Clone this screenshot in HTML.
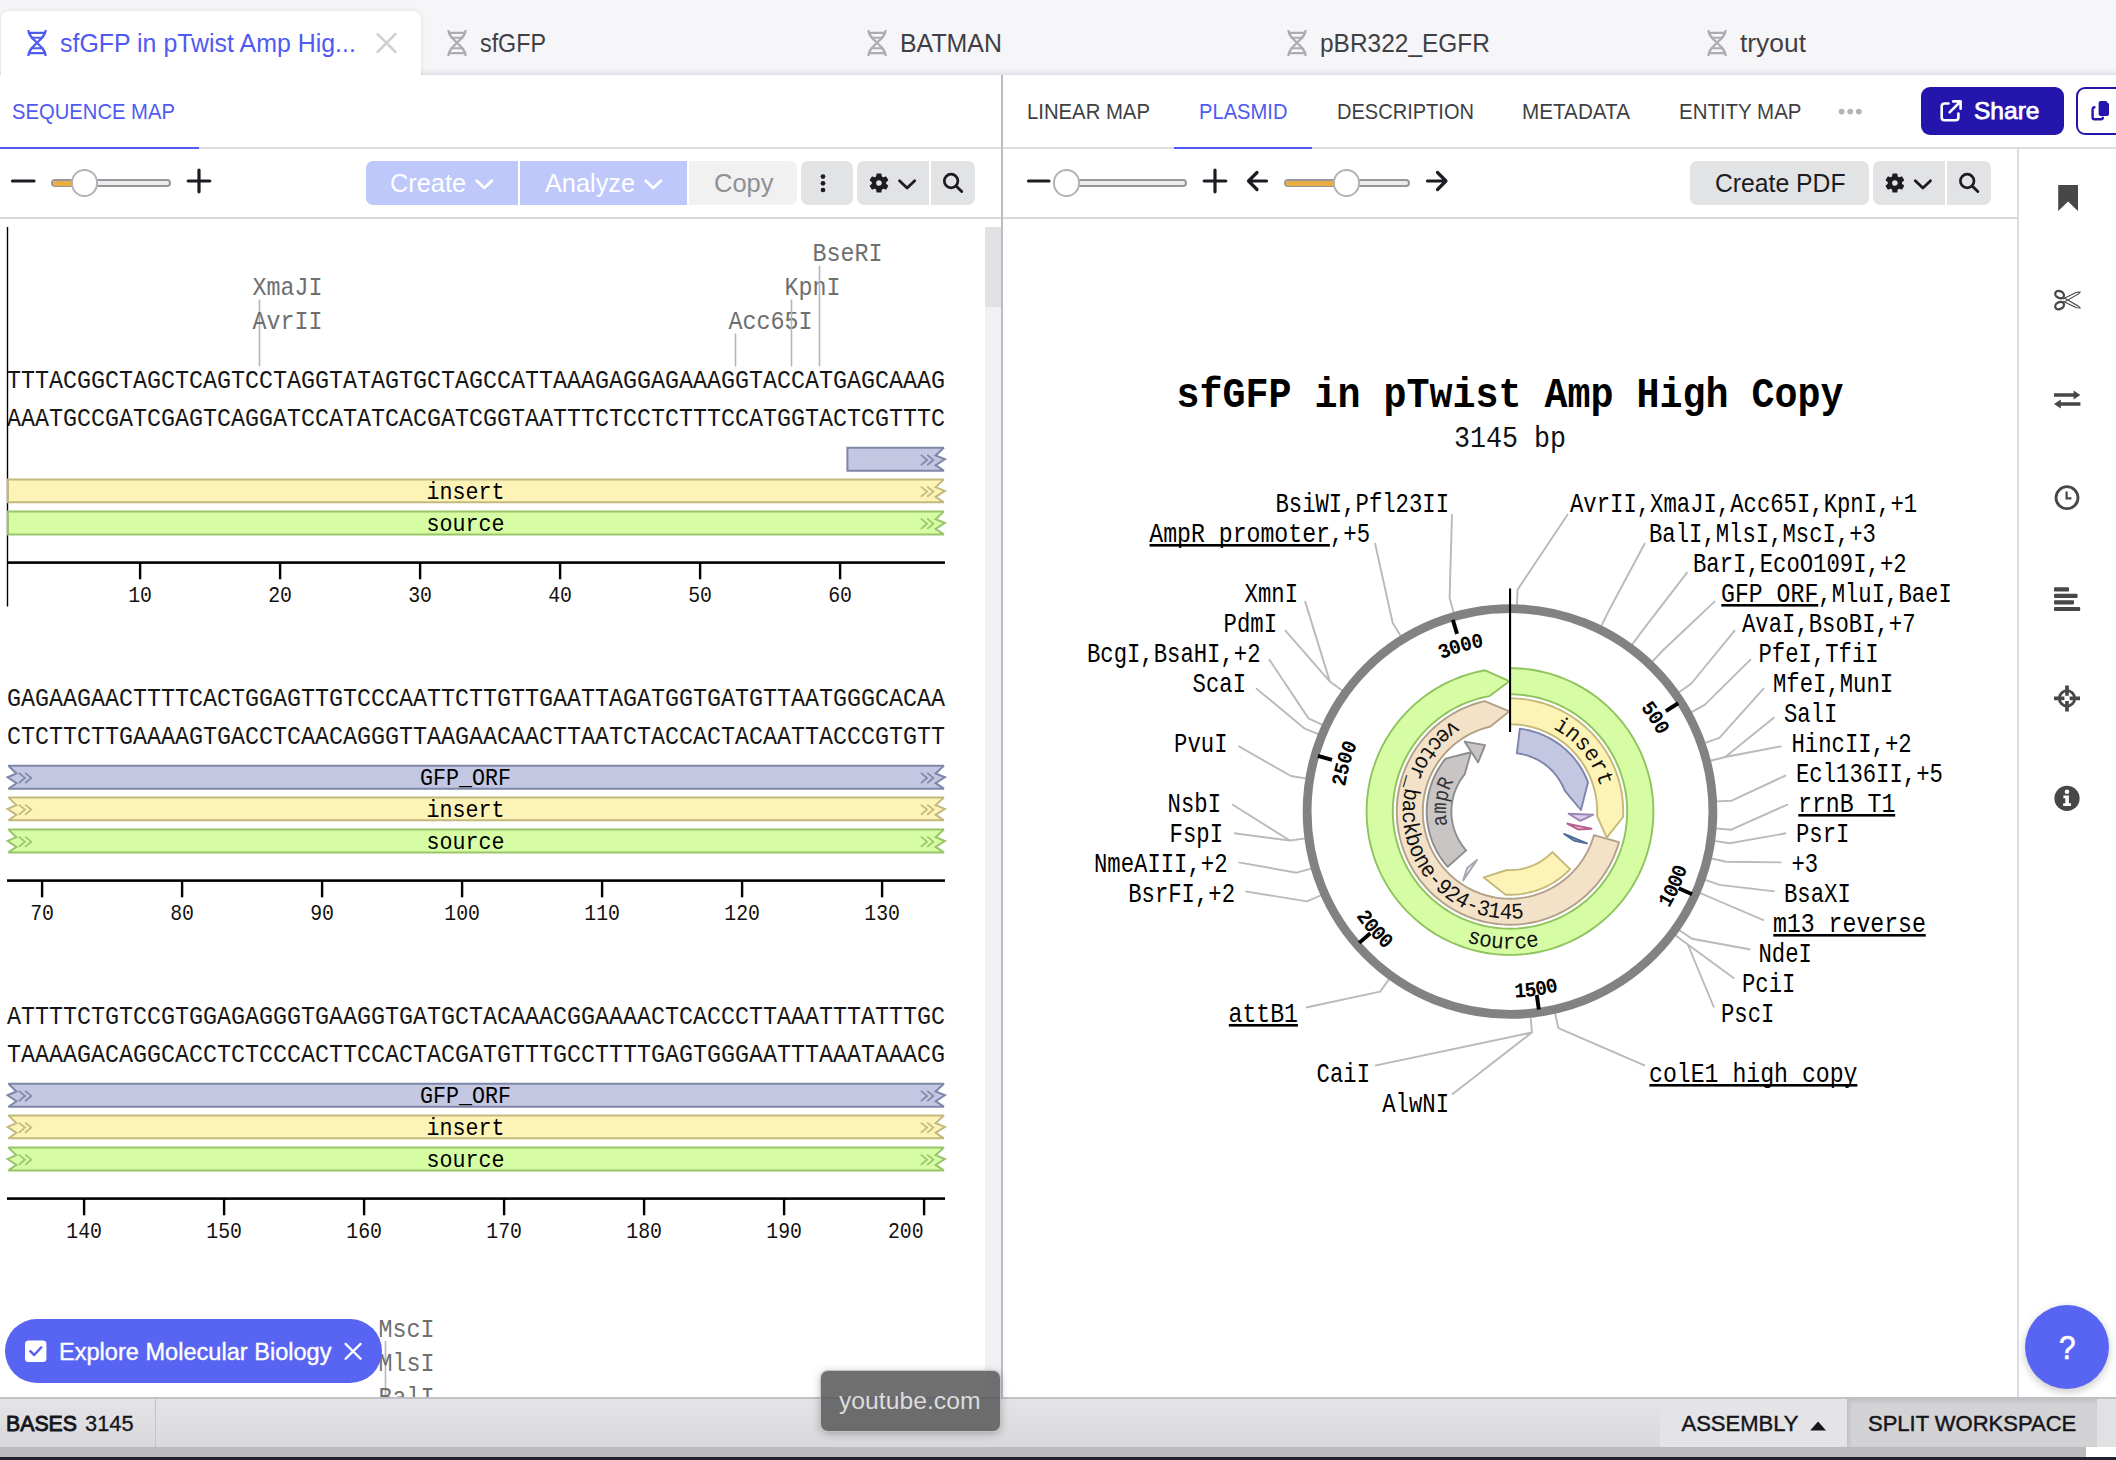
<!DOCTYPE html>
<html><head><meta charset="utf-8"><title>sfGFP in pTwist Amp High Copy</title>
<style>
*{box-sizing:border-box;margin:0;padding:0}
html,body{width:2116px;height:1460px;overflow:hidden;background:#fff;font-family:"Liberation Sans",sans-serif;color:#1c1c22}
.abs{position:absolute}
#topbar{position:absolute;left:0;top:0;width:2116px;height:75px;background:#f6f6f8;box-shadow:inset 0 -6px 5px -4px rgba(70,90,120,.17)}
.tab{position:absolute;top:11px;height:64px;width:420px;font-size:25px;line-height:64px;color:#46464b;white-space:nowrap}
.tab.act{background:#fff;border-radius:8px 8px 0 0;color:#4f5af0;box-shadow:0 0 5px rgba(0,0,0,.10)}
.tab svg{position:absolute;left:26px;top:19px}
.tab span{position:absolute;left:59px;top:0;letter-spacing:-.35px}
.sub{position:absolute;top:75px;height:72px;line-height:73px;font-size:21px;color:#3f3f44;white-space:nowrap;letter-spacing:-.2px}
.hl{position:absolute;height:2px;background:#dcdde0}
.btn{position:absolute;top:161px;height:44px;background:#e2e3e5;line-height:44px;text-align:center;font-size:26px;white-space:nowrap;letter-spacing:-.4px}
.trk{position:absolute;height:8.5px;border-radius:4.5px;background:#ececee;border:2px solid #97979b}
.org{position:absolute;height:5px;background:#e9ae43;border-radius:3px 0 0 3px}
.thumb{position:absolute;width:27.6px;height:27.6px;border-radius:50%;background:#fff;border:2px solid #b3b3b7}
.ic{position:absolute}
.t{position:absolute;white-space:nowrap;transform-origin:0 0;display:block}
</style></head><body>

<div id="topbar"></div>
<div class="tab act" style="left:1px"><svg width="20" height="26" viewBox="0 0 19.4 25.8" fill="none" stroke="#4f5af0" stroke-width="2.2"><path d="M1.1,0 C1.1,9.5 18.3,15.5 18.3,25.8 M18.3,0 C18.3,9.5 1.1,15.5 1.1,25.8" /><path d="M1.6,2.9 H17.8 M3.6,7.7 H15.8 M3.6,18.1 H15.8 M1.6,22.9 H17.8" stroke-width="2.1"/></svg></div>
<span class="t" style="left:60.00px;top:30.76px;font-size:25.2px;line-height:25.2px;color:#4f5af0;transform:scaleX(0.9892);">sfGFP in pTwist Amp Hig...</span>
<div class="tab" style="left:421px"><svg width="20" height="26" viewBox="0 0 19.4 25.8" fill="none" stroke="#adadb1" stroke-width="2.2"><path d="M1.1,0 C1.1,9.5 18.3,15.5 18.3,25.8 M18.3,0 C18.3,9.5 1.1,15.5 1.1,25.8" /><path d="M1.6,2.9 H17.8 M3.6,7.7 H15.8 M3.6,18.1 H15.8 M1.6,22.9 H17.8" stroke-width="2.1"/></svg></div>
<span class="t" style="left:480.00px;top:30.76px;font-size:25.2px;line-height:25.2px;color:#3f3f45;transform:scaleX(0.9243);">sfGFP</span>
<div class="tab" style="left:841px"><svg width="20" height="26" viewBox="0 0 19.4 25.8" fill="none" stroke="#adadb1" stroke-width="2.2"><path d="M1.1,0 C1.1,9.5 18.3,15.5 18.3,25.8 M18.3,0 C18.3,9.5 1.1,15.5 1.1,25.8" /><path d="M1.6,2.9 H17.8 M3.6,7.7 H15.8 M3.6,18.1 H15.8 M1.6,22.9 H17.8" stroke-width="2.1"/></svg></div>
<span class="t" style="left:900.00px;top:30.76px;font-size:25.2px;line-height:25.2px;color:#3f3f45;transform:scaleX(0.9890);">BATMAN</span>
<div class="tab" style="left:1261px"><svg width="20" height="26" viewBox="0 0 19.4 25.8" fill="none" stroke="#adadb1" stroke-width="2.2"><path d="M1.1,0 C1.1,9.5 18.3,15.5 18.3,25.8 M18.3,0 C18.3,9.5 1.1,15.5 1.1,25.8" /><path d="M1.6,2.9 H17.8 M3.6,7.7 H15.8 M3.6,18.1 H15.8 M1.6,22.9 H17.8" stroke-width="2.1"/></svg></div>
<span class="t" style="left:1320.00px;top:30.76px;font-size:25.2px;line-height:25.2px;color:#3f3f45;transform:scaleX(0.9710);">pBR322_EGFR</span>
<div class="tab" style="left:1681px"><svg width="20" height="26" viewBox="0 0 19.4 25.8" fill="none" stroke="#adadb1" stroke-width="2.2"><path d="M1.1,0 C1.1,9.5 18.3,15.5 18.3,25.8 M18.3,0 C18.3,9.5 1.1,15.5 1.1,25.8" /><path d="M1.6,2.9 H17.8 M3.6,7.7 H15.8 M3.6,18.1 H15.8 M1.6,22.9 H17.8" stroke-width="2.1"/></svg></div>
<span class="t" style="left:1740.00px;top:30.76px;font-size:25.2px;line-height:25.2px;color:#3f3f45;transform:scaleX(1.0472);">tryout</span>
<div class="abs " style="left:0px;top:75px;width:2116px;height:72px;background:#fff;"></div>
<svg class="ic" style="left:372px;top:30px" width="30" height="28"><path d="M4.9,3.3 L24.1,22.7 M24.1,3.3 L4.9,22.7" stroke="#cfcfd3" stroke-width="2.6" stroke-linecap="butt"/></svg>
<div class="abs " style="left:0px;top:147px;width:2116px;height:2px;background:#dcdde0;"></div>
<div class="abs " style="left:0px;top:147px;width:199px;height:2px;background:#4f5af0;"></div>
<div class="abs " style="left:1174px;top:147px;width:138px;height:2px;background:#4f5af0;"></div>
<span class="t" style="left:12.00px;top:102.08px;font-size:21.4px;line-height:21.4px;color:#4f5af0;transform:scaleX(0.9453);">SEQUENCE MAP</span>
<span class="t" style="left:1027.00px;top:102.08px;font-size:21.4px;line-height:21.4px;color:#3f3f44;transform:scaleX(0.9489);">LINEAR MAP</span>
<span class="t" style="left:1199.00px;top:102.08px;font-size:21.4px;line-height:21.4px;color:#4f5af0;transform:scaleX(0.9420);">PLASMID</span>
<span class="t" style="left:1336.50px;top:102.08px;font-size:21.4px;line-height:21.4px;color:#3f3f44;transform:scaleX(0.9368);">DESCRIPTION</span>
<span class="t" style="left:1522.00px;top:102.08px;font-size:21.4px;line-height:21.4px;color:#3f3f44;transform:scaleX(0.9664);">METADATA</span>
<span class="t" style="left:1679.00px;top:102.08px;font-size:21.4px;line-height:21.4px;color:#3f3f44;transform:scaleX(0.9568);">ENTITY MAP</span>
<svg class="ic" style="left:1836px;top:106px" width="30" height="12"><circle cx="5.6" cy="5.6" r="2.9" fill="#b4b4b8"/><circle cx="14.2" cy="5.6" r="2.9" fill="#b4b4b8"/><circle cx="22.8" cy="5.6" r="2.9" fill="#b4b4b8"/></svg>
<div class="abs " style="left:1921px;top:87px;width:143px;height:48px;background:#2416ac;border-radius:9px"></div>
<svg class="ic" style="left:1938px;top:98px" width="26" height="26" fill="none" stroke="#fff" stroke-width="2.6" stroke-linecap="round" stroke-linejoin="round"><path d="M10.5,5.5 H6.3 a2.6,2.6 0 0 0 -2.6,2.6 V19.6 a2.6,2.6 0 0 0 2.6,2.6 H17.8 a2.6,2.6 0 0 0 2.6,-2.6 V15.6"/><path d="M15.2,3.4 H22.6 V10.8 M22,4 L11.6,14.4"/></svg>
<span class="t" style="left:1973.80px;top:100.02px;font-size:23.6px;line-height:23.6px;color:#fff;-webkit-text-stroke:0.75px #fff;transform:scaleX(1.0401);">Share</span>
<div class="abs" style="left:2076px;top:87px;width:60px;height:48px;border:2.5px solid #2416ac;border-radius:9px;background:#fff"></div>
<svg class="ic" style="left:2086px;top:96px" width="30" height="30" viewBox="2086 96 30 30"><path d="M2100.6,101 h5.4 l3,3 v9.9 a2,2 0 0 1 -2,2 h-6.4 a2,2 0 0 1 -2,-2 v-10.9 a2,2 0 0 1 2,-2z" fill="#2416ac"/><path d="M2095.4,107.3 h-1 a1.8,1.8 0 0 0 -1.8,1.8 v8.4 a1.8,1.8 0 0 0 1.8,1.8 h6.6 a1.8,1.8 0 0 0 1.8,-1.8 v-0.8" fill="none" stroke="#2416ac" stroke-width="2.4"/></svg>
<div class="abs " style="left:0px;top:217px;width:2019px;height:2px;background:#d9dadd;"></div>
<svg class="ic" style="left:0;top:150px" width="2020" height="66" stroke="#1c1c22" stroke-width="3.2" stroke-linecap="round" stroke-linejoin="round" fill="none"><path d="M12.5,31 H34"/><path d="M188.2,31 H209.8 M199,20.2 V41.8"/><path d="M1028.5,31 H1049"/><path d="M1204.2,31 H1225.8 M1215,20.2 V41.8"/><path d="M1266.5,31 H1249 M1257,22.5 L1248.5,31 L1257,39.5"/><path d="M1427.5,31 H1445.5 M1437.5,22.5 L1446,31 L1437.5,39.5"/></svg>
<div class="trk" style="left:51px;top:178.7px;width:120px"></div><div class="org" style="left:53px;top:180.7px;width:24px"></div><div class="thumb" style="left:70.9px;top:169.1px"></div>
<div class="trk" style="left:1066px;top:178.7px;width:121px"></div><div class="thumb" style="left:1052.7px;top:169.1px"></div>
<div class="trk" style="left:1284px;top:178.7px;width:126px"></div><div class="org" style="left:1286px;top:180.7px;width:55px"></div><div class="thumb" style="left:1332.8px;top:169.1px"></div>
<div class="abs " style="left:366px;top:161px;width:152px;height:44px;background:#bec8fa;border-radius:7px 0 0 7px"></div>
<div class="abs " style="left:520px;top:161px;width:167px;height:44px;background:#bec8fa;"></div>
<div class="abs " style="left:689px;top:161px;width:108px;height:44px;background:#f1f1f2;border-radius:0 7px 7px 0"></div>
<div class="abs " style="left:801px;top:161px;width:52px;height:44px;background:#e2e3e5;border-radius:7px"></div>
<div class="abs " style="left:857px;top:161px;width:72px;height:44px;background:#e2e3e5;border-radius:7px 0 0 7px"></div>
<div class="abs " style="left:931px;top:161px;width:44px;height:44px;background:#e2e3e5;border-radius:0 7px 7px 0"></div>
<span class="t" style="left:390.00px;top:169.99px;font-size:26px;line-height:26px;color:#fff;transform:scaleX(0.9739);">Create</span>
<span class="t" style="left:545.00px;top:169.99px;font-size:26px;line-height:26px;color:#fff;transform:scaleX(0.9730);">Analyze</span>
<span class="t" style="left:713.50px;top:169.99px;font-size:26px;line-height:26px;color:#8e9096;transform:scaleX(0.9803);">Copy</span>
<div class="abs " style="left:1690px;top:161px;width:179px;height:44px;background:#e2e3e5;border-radius:7px"></div>
<div class="abs " style="left:1873px;top:161px;width:72px;height:44px;background:#e2e3e5;border-radius:7px 0 0 7px"></div>
<div class="abs " style="left:1947px;top:161px;width:44px;height:44px;background:#e2e3e5;border-radius:0 7px 7px 0"></div>
<span class="t" style="left:1714.50px;top:169.99px;font-size:26px;line-height:26px;color:#1c1c22;transform:scaleX(0.9507);">Create PDF</span>
<svg class="ic" style="left:0;top:150px" width="2020" height="66"><g transform="translate(0,-150)"><path d="M476.70,180.65 l7.60,7.30 l7.60,-7.30" fill="none" stroke="#fff" stroke-width="2.8" stroke-linecap="round" stroke-linejoin="round"/><path d="M645.70,180.65 l7.60,7.30 l7.60,-7.30" fill="none" stroke="#fff" stroke-width="2.8" stroke-linecap="round" stroke-linejoin="round"/><circle cx="823" cy="176.6" r="2.35" fill="#1c1c22"/><circle cx="823" cy="183.3" r="2.35" fill="#1c1c22"/><circle cx="823" cy="190" r="2.35" fill="#1c1c22"/><path d="M876.86,176.76 L877.21,174.18 L880.79,174.18 L881.14,176.76 L883.34,178.03 L885.74,177.04 L887.53,180.14 L885.48,181.73 L885.48,184.27 L887.53,185.86 L885.74,188.96 L883.34,187.97 L881.14,189.24 L880.79,191.82 L877.21,191.82 L876.86,189.24 L874.66,187.97 L872.26,188.96 L870.47,185.86 L872.52,184.27 L872.52,181.73 L870.47,180.14 L872.26,177.04 L874.66,178.03Z M875.50,183.00 a3.50,3.50 0 1,0 7.00,0 a3.50,3.50 0 1,0 -7.00,0Z" fill="#1c1c22" fill-rule="evenodd" stroke="#1c1c22" stroke-width="1.4" stroke-linejoin="round"/><path d="M899.50,180.75 l7.60,7.30 l7.60,-7.30" fill="none" stroke="#1c1c22" stroke-width="2.8" stroke-linecap="round" stroke-linejoin="round"/><circle cx="951.10" cy="181.00" r="6.8" fill="none" stroke="#1c1c22" stroke-width="2.7"/><path d="M956.30,186.20 L961.70,191.50" stroke="#1c1c22" stroke-width="2.9" stroke-linecap="round"/><path d="M1892.76,176.76 L1893.11,174.18 L1896.69,174.18 L1897.04,176.76 L1899.24,178.03 L1901.64,177.04 L1903.43,180.14 L1901.38,181.73 L1901.38,184.27 L1903.43,185.86 L1901.64,188.96 L1899.24,187.97 L1897.04,189.24 L1896.69,191.82 L1893.11,191.82 L1892.76,189.24 L1890.56,187.97 L1888.16,188.96 L1886.37,185.86 L1888.42,184.27 L1888.42,181.73 L1886.37,180.14 L1888.16,177.04 L1890.56,178.03Z M1891.40,183.00 a3.50,3.50 0 1,0 7.00,0 a3.50,3.50 0 1,0 -7.00,0Z" fill="#1c1c22" fill-rule="evenodd" stroke="#1c1c22" stroke-width="1.4" stroke-linejoin="round"/><path d="M1915.30,180.75 l7.60,7.30 l7.60,-7.30" fill="none" stroke="#1c1c22" stroke-width="2.8" stroke-linecap="round" stroke-linejoin="round"/><circle cx="1967.20" cy="181.00" r="6.8" fill="none" stroke="#1c1c22" stroke-width="2.7"/><path d="M1972.40,186.20 L1977.80,191.50" stroke="#1c1c22" stroke-width="2.9" stroke-linecap="round"/></g></svg>
<svg class="ic" style="left:0;top:219px" width="1001" height="1179" viewBox="0 219 1001 1179" font-family='"Liberation Mono",monospace'><rect x="985" y="227" width="16" height="1171" fill="#f0f1f3"/><rect x="985" y="227" width="16" height="80" fill="#e1e2e4"/><rect x="6.8" y="227" width="1.4" height="379.5" fill="#000"/><rect x="258.70" y="299.50" width="1.6" height="67.00" fill="#b6b6be"/><text x="252.50" y="295.00" font-size="26" fill="#6f6f6f" textLength="70.00" lengthAdjust="spacingAndGlyphs">XmaJI</text><text x="252.50" y="329.00" font-size="26" fill="#6f6f6f" textLength="70.00" lengthAdjust="spacingAndGlyphs">AvrII</text><rect x="734.70" y="333.50" width="1.6" height="33.00" fill="#b6b6be"/><text x="728.50" y="329.00" font-size="26" fill="#6f6f6f" textLength="84.00" lengthAdjust="spacingAndGlyphs">Acc65I</text><rect x="790.70" y="299.50" width="1.6" height="67.00" fill="#b6b6be"/><text x="784.50" y="295.00" font-size="26" fill="#6f6f6f" textLength="56.00" lengthAdjust="spacingAndGlyphs">KpnI</text><rect x="818.70" y="265.50" width="1.6" height="101.00" fill="#b6b6be"/><text x="812.50" y="261.00" font-size="26" fill="#6f6f6f" textLength="70.00" lengthAdjust="spacingAndGlyphs">BseRI</text><text x="7.10" y="388.30" font-size="26" fill="#161616" textLength="938.00" lengthAdjust="spacingAndGlyphs">TTTACGGCTAGCTCAGTCCTAGGTATAGTGCTAGCCATTAAAGAGGAGAAAGGTACCATGAGCAAAG</text><text x="7.10" y="426.30" font-size="26" fill="#161616" textLength="938.00" lengthAdjust="spacingAndGlyphs">AAATGCCGATCGAGTCAGGATCCATATCACGATCGGTAATTTCTCCTCTTTCCATGGTACTCGTTTC</text><path d="M847.40,447.80 L943.90,447.80 L935.60,455.47 L944.90,459.25 L935.60,465.20 L943.90,470.70 L847.40,470.70Z" fill="#c3c7e2" stroke="#7f86a8" stroke-width="2" stroke-linejoin="miter" stroke-miterlimit="2.5"/><path d="M920.90,454.94 l6.2,5 l-6.2,5.2 M927.20,454.94 l6.2,5 l-6.2,5.2" fill="none" stroke="#7f86a8" stroke-width="1.7"/><path d="M8.00,479.40 L943.90,479.40 L935.60,487.07 L944.90,490.85 L935.60,496.80 L943.90,502.30 L8.00,502.30Z" fill="#fdf3b6" stroke="#c3b97c" stroke-width="2" stroke-linejoin="miter" stroke-miterlimit="2.5"/><path d="M920.90,486.54 l6.2,5 l-6.2,5.2 M927.20,486.54 l6.2,5 l-6.2,5.2" fill="none" stroke="#c3b97c" stroke-width="1.7"/><text x="426.50" y="498.70" font-size="24" fill="#000" textLength="78.00" lengthAdjust="spacingAndGlyphs">insert</text><path d="M8.00,511.50 L943.90,511.50 L935.60,519.17 L944.90,522.95 L935.60,528.90 L943.90,534.40 L8.00,534.40Z" fill="#d6fda3" stroke="#9ac66b" stroke-width="2" stroke-linejoin="miter" stroke-miterlimit="2.5"/><path d="M920.90,518.64 l6.2,5 l-6.2,5.2 M927.20,518.64 l6.2,5 l-6.2,5.2" fill="none" stroke="#9ac66b" stroke-width="1.7"/><text x="426.50" y="530.80" font-size="24" fill="#000" textLength="78.00" lengthAdjust="spacingAndGlyphs">source</text><rect x="7" y="561.30" width="938" height="2.6" fill="#000"/><rect x="138.90" y="562.80" width="2.4" height="16.5" fill="#000"/><text x="128.20" y="601.60" font-size="22.3" fill="#111" textLength="23.80" lengthAdjust="spacingAndGlyphs">10</text><rect x="278.90" y="562.80" width="2.4" height="16.5" fill="#000"/><text x="268.20" y="601.60" font-size="22.3" fill="#111" textLength="23.80" lengthAdjust="spacingAndGlyphs">20</text><rect x="418.90" y="562.80" width="2.4" height="16.5" fill="#000"/><text x="408.20" y="601.60" font-size="22.3" fill="#111" textLength="23.80" lengthAdjust="spacingAndGlyphs">30</text><rect x="558.90" y="562.80" width="2.4" height="16.5" fill="#000"/><text x="548.20" y="601.60" font-size="22.3" fill="#111" textLength="23.80" lengthAdjust="spacingAndGlyphs">40</text><rect x="698.90" y="562.80" width="2.4" height="16.5" fill="#000"/><text x="688.20" y="601.60" font-size="22.3" fill="#111" textLength="23.80" lengthAdjust="spacingAndGlyphs">50</text><rect x="838.90" y="562.80" width="2.4" height="16.5" fill="#000"/><text x="828.20" y="601.60" font-size="22.3" fill="#111" textLength="23.80" lengthAdjust="spacingAndGlyphs">60</text><text x="7.10" y="706.30" font-size="26" fill="#161616" textLength="938.00" lengthAdjust="spacingAndGlyphs">GAGAAGAACTTTTCACTGGAGTTGTCCCAATTCTTGTTGAATTAGATGGTGATGTTAATGGGCACAA</text><text x="7.10" y="744.30" font-size="26" fill="#161616" textLength="938.00" lengthAdjust="spacingAndGlyphs">CTCTTCTTGAAAAGTGACCTCAACAGGGTTAAGAACAACTTAATCTACCACTACAATTACCCGTGTT</text><path d="M8.40,765.80 L943.90,765.80 L935.60,773.47 L944.90,777.25 L935.60,783.20 L943.90,788.70 L8.40,788.70 L16.40,783.20 L7.60,777.25 L16.40,773.47Z" fill="#c3c7e2" stroke="#7f86a8" stroke-width="2" stroke-linejoin="miter" stroke-miterlimit="2.5"/><path d="M920.90,772.94 l6.2,5 l-6.2,5.2 M927.20,772.94 l6.2,5 l-6.2,5.2" fill="none" stroke="#7f86a8" stroke-width="1.7"/><path d="M18.80,772.94 l6.2,5 l-6.2,5.2 M25.10,772.94 l6.2,5 l-6.2,5.2" fill="none" stroke="#7f86a8" stroke-width="1.7"/><text x="420.00" y="785.10" font-size="24" fill="#000" textLength="91.00" lengthAdjust="spacingAndGlyphs">GFP_ORF</text><path d="M8.40,797.40 L943.90,797.40 L935.60,805.07 L944.90,808.85 L935.60,814.80 L943.90,820.30 L8.40,820.30 L16.40,814.80 L7.60,808.85 L16.40,805.07Z" fill="#fdf3b6" stroke="#c3b97c" stroke-width="2" stroke-linejoin="miter" stroke-miterlimit="2.5"/><path d="M920.90,804.54 l6.2,5 l-6.2,5.2 M927.20,804.54 l6.2,5 l-6.2,5.2" fill="none" stroke="#c3b97c" stroke-width="1.7"/><path d="M18.80,804.54 l6.2,5 l-6.2,5.2 M25.10,804.54 l6.2,5 l-6.2,5.2" fill="none" stroke="#c3b97c" stroke-width="1.7"/><text x="426.50" y="816.70" font-size="24" fill="#000" textLength="78.00" lengthAdjust="spacingAndGlyphs">insert</text><path d="M8.40,829.50 L943.90,829.50 L935.60,837.17 L944.90,840.95 L935.60,846.90 L943.90,852.40 L8.40,852.40 L16.40,846.90 L7.60,840.95 L16.40,837.17Z" fill="#d6fda3" stroke="#9ac66b" stroke-width="2" stroke-linejoin="miter" stroke-miterlimit="2.5"/><path d="M920.90,836.64 l6.2,5 l-6.2,5.2 M927.20,836.64 l6.2,5 l-6.2,5.2" fill="none" stroke="#9ac66b" stroke-width="1.7"/><path d="M18.80,836.64 l6.2,5 l-6.2,5.2 M25.10,836.64 l6.2,5 l-6.2,5.2" fill="none" stroke="#9ac66b" stroke-width="1.7"/><text x="426.50" y="848.80" font-size="24" fill="#000" textLength="78.00" lengthAdjust="spacingAndGlyphs">source</text><rect x="7" y="879.30" width="938" height="2.6" fill="#000"/><rect x="40.90" y="880.80" width="2.4" height="16.5" fill="#000"/><text x="30.20" y="919.60" font-size="22.3" fill="#111" textLength="23.80" lengthAdjust="spacingAndGlyphs">70</text><rect x="180.90" y="880.80" width="2.4" height="16.5" fill="#000"/><text x="170.20" y="919.60" font-size="22.3" fill="#111" textLength="23.80" lengthAdjust="spacingAndGlyphs">80</text><rect x="320.90" y="880.80" width="2.4" height="16.5" fill="#000"/><text x="310.20" y="919.60" font-size="22.3" fill="#111" textLength="23.80" lengthAdjust="spacingAndGlyphs">90</text><rect x="460.90" y="880.80" width="2.4" height="16.5" fill="#000"/><text x="444.25" y="919.60" font-size="22.3" fill="#111" textLength="35.70" lengthAdjust="spacingAndGlyphs">100</text><rect x="600.90" y="880.80" width="2.4" height="16.5" fill="#000"/><text x="584.25" y="919.60" font-size="22.3" fill="#111" textLength="35.70" lengthAdjust="spacingAndGlyphs">110</text><rect x="740.90" y="880.80" width="2.4" height="16.5" fill="#000"/><text x="724.25" y="919.60" font-size="22.3" fill="#111" textLength="35.70" lengthAdjust="spacingAndGlyphs">120</text><rect x="880.90" y="880.80" width="2.4" height="16.5" fill="#000"/><text x="864.25" y="919.60" font-size="22.3" fill="#111" textLength="35.70" lengthAdjust="spacingAndGlyphs">130</text><text x="7.10" y="1024.30" font-size="26" fill="#161616" textLength="938.00" lengthAdjust="spacingAndGlyphs">ATTTTCTGTCCGTGGAGAGGGTGAAGGTGATGCTACAAACGGAAAACTCACCCTTAAATTTATTTGC</text><text x="7.10" y="1062.30" font-size="26" fill="#161616" textLength="938.00" lengthAdjust="spacingAndGlyphs">TAAAAGACAGGCACCTCTCCCACTTCCACTACGATGTTTGCCTTTTGAGTGGGAATTTAAATAAACG</text><path d="M8.40,1083.80 L943.90,1083.80 L935.60,1091.47 L944.90,1095.25 L935.60,1101.20 L943.90,1106.70 L8.40,1106.70 L16.40,1101.20 L7.60,1095.25 L16.40,1091.47Z" fill="#c3c7e2" stroke="#7f86a8" stroke-width="2" stroke-linejoin="miter" stroke-miterlimit="2.5"/><path d="M920.90,1090.94 l6.2,5 l-6.2,5.2 M927.20,1090.94 l6.2,5 l-6.2,5.2" fill="none" stroke="#7f86a8" stroke-width="1.7"/><path d="M18.80,1090.94 l6.2,5 l-6.2,5.2 M25.10,1090.94 l6.2,5 l-6.2,5.2" fill="none" stroke="#7f86a8" stroke-width="1.7"/><text x="420.00" y="1103.10" font-size="24" fill="#000" textLength="91.00" lengthAdjust="spacingAndGlyphs">GFP_ORF</text><path d="M8.40,1115.40 L943.90,1115.40 L935.60,1123.07 L944.90,1126.85 L935.60,1132.80 L943.90,1138.30 L8.40,1138.30 L16.40,1132.80 L7.60,1126.85 L16.40,1123.07Z" fill="#fdf3b6" stroke="#c3b97c" stroke-width="2" stroke-linejoin="miter" stroke-miterlimit="2.5"/><path d="M920.90,1122.54 l6.2,5 l-6.2,5.2 M927.20,1122.54 l6.2,5 l-6.2,5.2" fill="none" stroke="#c3b97c" stroke-width="1.7"/><path d="M18.80,1122.54 l6.2,5 l-6.2,5.2 M25.10,1122.54 l6.2,5 l-6.2,5.2" fill="none" stroke="#c3b97c" stroke-width="1.7"/><text x="426.50" y="1134.70" font-size="24" fill="#000" textLength="78.00" lengthAdjust="spacingAndGlyphs">insert</text><path d="M8.40,1147.50 L943.90,1147.50 L935.60,1155.17 L944.90,1158.95 L935.60,1164.90 L943.90,1170.40 L8.40,1170.40 L16.40,1164.90 L7.60,1158.95 L16.40,1155.17Z" fill="#d6fda3" stroke="#9ac66b" stroke-width="2" stroke-linejoin="miter" stroke-miterlimit="2.5"/><path d="M920.90,1154.64 l6.2,5 l-6.2,5.2 M927.20,1154.64 l6.2,5 l-6.2,5.2" fill="none" stroke="#9ac66b" stroke-width="1.7"/><path d="M18.80,1154.64 l6.2,5 l-6.2,5.2 M25.10,1154.64 l6.2,5 l-6.2,5.2" fill="none" stroke="#9ac66b" stroke-width="1.7"/><text x="426.50" y="1166.80" font-size="24" fill="#000" textLength="78.00" lengthAdjust="spacingAndGlyphs">source</text><rect x="7" y="1197.30" width="938" height="2.6" fill="#000"/><rect x="82.90" y="1198.80" width="2.4" height="16.5" fill="#000"/><text x="66.25" y="1237.60" font-size="22.3" fill="#111" textLength="35.70" lengthAdjust="spacingAndGlyphs">140</text><rect x="222.90" y="1198.80" width="2.4" height="16.5" fill="#000"/><text x="206.25" y="1237.60" font-size="22.3" fill="#111" textLength="35.70" lengthAdjust="spacingAndGlyphs">150</text><rect x="362.90" y="1198.80" width="2.4" height="16.5" fill="#000"/><text x="346.25" y="1237.60" font-size="22.3" fill="#111" textLength="35.70" lengthAdjust="spacingAndGlyphs">160</text><rect x="502.90" y="1198.80" width="2.4" height="16.5" fill="#000"/><text x="486.25" y="1237.60" font-size="22.3" fill="#111" textLength="35.70" lengthAdjust="spacingAndGlyphs">170</text><rect x="642.90" y="1198.80" width="2.4" height="16.5" fill="#000"/><text x="626.25" y="1237.60" font-size="22.3" fill="#111" textLength="35.70" lengthAdjust="spacingAndGlyphs">180</text><rect x="782.90" y="1198.80" width="2.4" height="16.5" fill="#000"/><text x="766.25" y="1237.60" font-size="22.3" fill="#111" textLength="35.70" lengthAdjust="spacingAndGlyphs">190</text><rect x="922.90" y="1198.80" width="2.4" height="16.5" fill="#000"/><text x="887.90" y="1237.60" font-size="22.3" fill="#111" textLength="35.70" lengthAdjust="spacingAndGlyphs">200</text><rect x="384.70" y="1341" width="1.6" height="60" fill="#b6b6be"/><text x="378.50" y="1337.00" font-size="26" fill="#6f6f6f" textLength="56.00" lengthAdjust="spacingAndGlyphs">MscI</text><text x="378.50" y="1371.00" font-size="26" fill="#6f6f6f" textLength="56.00" lengthAdjust="spacingAndGlyphs">MlsI</text><text x="378.50" y="1405.00" font-size="26" fill="#6f6f6f" textLength="56.00" lengthAdjust="spacingAndGlyphs">BalI</text></svg>
<svg class="ic" style="left:1004px;top:219px" width="1014" height="1179" viewBox="1004 219 1014 1179" font-family='"Liberation Mono",monospace'><text x="1176.50" y="406.50" font-size="42" fill="#000" textLength="667.00" lengthAdjust="spacingAndGlyphs" font-weight="bold">sfGFP in pTwist Amp High Copy</text><text x="1454.00" y="446.50" font-size="30" fill="#111" textLength="112.00" lengthAdjust="spacingAndGlyphs">3145 bp</text><path d="M1517.0,605.6 L1517.6,589.6 L1568.0,514.0 M1601.0,626.7 L1608.0,612.3 L1645.0,543.0 M1631.7,645.3 L1641.1,632.4 L1687.4,572.1 M1651.8,662.1 L1662.8,650.5 L1715.0,601.1 M1678.3,692.8 L1691.4,683.5 L1735.0,630.1 M1690.7,712.6 L1704.7,704.9 L1751.0,659.1 M1704.3,743.1 L1719.4,737.8 L1764.0,688.2 M1709.7,761.0 L1725.2,757.0 L1774.4,717.2 M1709.7,761.0 L1725.2,757.0 L1781.5,746.2 M1715.8,801.4 L1731.7,800.7 L1786.0,775.3 M1715.3,828.4 L1731.3,829.7 L1788.0,804.3 M1713.9,840.9 L1729.7,843.2 L1786.0,833.3 M1710.6,858.2 L1726.2,861.8 L1781.5,862.4 M1704.4,879.6 L1719.5,884.9 L1774.6,891.4 M1699.3,892.7 L1714.0,899.0 L1764.0,920.4 M1678.7,929.7 L1691.9,938.8 L1750.5,949.5 M1675.0,934.9 L1687.8,944.5 L1734.3,978.5 M1675.0,934.9 L1687.8,944.5 L1714.0,1007.5 M1554.9,1012.5 L1558.4,1028.2 L1645.0,1065.6 M1453.9,613.3 L1449.6,597.9 L1452.0,514.0 M1401.1,636.6 L1392.7,623.0 L1375.0,543.0 M1342.9,691.0 L1329.9,681.6 L1305.0,601.1 M1342.9,691.0 L1329.9,681.6 L1285.0,630.1 M1323.0,725.1 L1308.5,718.4 L1269.0,659.1 M1319.0,734.3 L1304.2,728.3 L1256.0,688.2 M1306.6,778.6 L1290.9,776.0 L1238.5,746.2 M1305.8,838.4 L1289.9,840.5 L1232.0,804.3 M1305.8,838.4 L1289.9,840.5 L1234.0,833.3 M1312.0,868.3 L1296.6,872.7 L1238.5,862.4 M1321.7,895.0 L1307.0,901.4 L1245.4,891.4 M1389.5,978.6 L1380.1,991.6 L1306.0,1007.5 M1530.5,1016.5 L1532.0,1032.4 L1375.0,1065.6 M1530.5,1016.5 L1532.0,1032.4 L1452.0,1094.6" fill="none" stroke="#b9b9be" stroke-width="1.9" stroke-linejoin="round"/><text x="1570.00" y="512.00" font-size="27.3" fill="#000" textLength="347.10" lengthAdjust="spacingAndGlyphs">AvrII,XmaJI,Acc65I,KpnI,+1</text><text x="1649.00" y="542.00" font-size="27.3" fill="#000" textLength="226.95" lengthAdjust="spacingAndGlyphs">BalI,MlsI,MscI,+3</text><text x="1693.00" y="572.00" font-size="27.3" fill="#000" textLength="213.60" lengthAdjust="spacingAndGlyphs">BarI,EcoO109I,+2</text><text x="1721.00" y="602.00" font-size="28.4247" fill="#000" textLength="97.30" lengthAdjust="spacingAndGlyphs">GFP_ORF</text><rect x="1721.30" y="604.00" width="96.90" height="2.6" fill="#000"/><text x="1818.30" y="602.00" font-size="27.3" fill="#000" textLength="133.50" lengthAdjust="spacingAndGlyphs">,MluI,BaeI</text><text x="1742.00" y="632.00" font-size="27.3" fill="#000" textLength="173.55" lengthAdjust="spacingAndGlyphs">AvaI,BsoBI,+7</text><text x="1758.50" y="662.00" font-size="27.3" fill="#000" textLength="120.15" lengthAdjust="spacingAndGlyphs">PfeI,TfiI</text><text x="1773.00" y="692.00" font-size="27.3" fill="#000" textLength="120.15" lengthAdjust="spacingAndGlyphs">MfeI,MunI</text><text x="1784.00" y="722.00" font-size="27.3" fill="#000" textLength="53.40" lengthAdjust="spacingAndGlyphs">SalI</text><text x="1791.50" y="752.00" font-size="27.3" fill="#000" textLength="120.15" lengthAdjust="spacingAndGlyphs">HincII,+2</text><text x="1796.00" y="782.00" font-size="27.3" fill="#000" textLength="146.85" lengthAdjust="spacingAndGlyphs">Ecl136II,+5</text><text x="1798.00" y="812.00" font-size="28.4247" fill="#000" textLength="97.30" lengthAdjust="spacingAndGlyphs">rrnB_T1</text><rect x="1798.30" y="814.00" width="96.90" height="2.6" fill="#000"/><text x="1796.00" y="842.00" font-size="27.3" fill="#000" textLength="53.40" lengthAdjust="spacingAndGlyphs">PsrI</text><text x="1791.50" y="872.00" font-size="27.3" fill="#000" textLength="26.70" lengthAdjust="spacingAndGlyphs">+3</text><text x="1784.00" y="902.00" font-size="27.3" fill="#000" textLength="66.75" lengthAdjust="spacingAndGlyphs">BsaXI</text><text x="1773.00" y="932.00" font-size="28.4247" fill="#000" textLength="152.90" lengthAdjust="spacingAndGlyphs">m13_reverse</text><rect x="1773.30" y="934.00" width="152.50" height="2.6" fill="#000"/><text x="1758.50" y="962.00" font-size="27.3" fill="#000" textLength="53.40" lengthAdjust="spacingAndGlyphs">NdeI</text><text x="1742.00" y="992.00" font-size="27.3" fill="#000" textLength="53.40" lengthAdjust="spacingAndGlyphs">PciI</text><text x="1721.00" y="1022.00" font-size="27.3" fill="#000" textLength="53.40" lengthAdjust="spacingAndGlyphs">PscI</text><text x="1649.00" y="1082.00" font-size="28.4247" fill="#000" textLength="208.50" lengthAdjust="spacingAndGlyphs">colE1_high_copy</text><rect x="1649.30" y="1084.00" width="208.10" height="2.6" fill="#000"/><text x="1275.45" y="512.00" font-size="27.3" fill="#000" textLength="173.55" lengthAdjust="spacingAndGlyphs">BsiWI,Pfl23II</text><text x="1149.25" y="542.00" font-size="28.4247" fill="#000" textLength="180.70" lengthAdjust="spacingAndGlyphs">AmpR_promoter</text><rect x="1149.55" y="544.00" width="180.30" height="2.6" fill="#000"/><text x="1329.95" y="542.00" font-size="27.3" fill="#000" textLength="40.05" lengthAdjust="spacingAndGlyphs">,+5</text><text x="1244.60" y="602.00" font-size="27.3" fill="#000" textLength="53.40" lengthAdjust="spacingAndGlyphs">XmnI</text><text x="1223.60" y="632.00" font-size="27.3" fill="#000" textLength="53.40" lengthAdjust="spacingAndGlyphs">PdmI</text><text x="1086.95" y="662.00" font-size="27.3" fill="#000" textLength="173.55" lengthAdjust="spacingAndGlyphs">BcgI,BsaHI,+2</text><text x="1192.60" y="692.00" font-size="27.3" fill="#000" textLength="53.40" lengthAdjust="spacingAndGlyphs">ScaI</text><text x="1174.10" y="752.00" font-size="27.3" fill="#000" textLength="53.40" lengthAdjust="spacingAndGlyphs">PvuI</text><text x="1167.60" y="812.00" font-size="27.3" fill="#000" textLength="53.40" lengthAdjust="spacingAndGlyphs">NsbI</text><text x="1169.60" y="842.00" font-size="27.3" fill="#000" textLength="53.40" lengthAdjust="spacingAndGlyphs">FspI</text><text x="1094.00" y="872.00" font-size="27.3" fill="#000" textLength="133.50" lengthAdjust="spacingAndGlyphs">NmeAIII,+2</text><text x="1128.20" y="902.00" font-size="27.3" fill="#000" textLength="106.80" lengthAdjust="spacingAndGlyphs">BsrFI,+2</text><text x="1228.50" y="1022.00" font-size="28.4247" fill="#000" textLength="69.50" lengthAdjust="spacingAndGlyphs">attB1</text><rect x="1228.80" y="1024.00" width="69.10" height="2.6" fill="#000"/><text x="1316.60" y="1082.00" font-size="27.3" fill="#000" textLength="53.40" lengthAdjust="spacingAndGlyphs">CaiI</text><text x="1382.25" y="1112.00" font-size="27.3" fill="#000" textLength="66.75" lengthAdjust="spacingAndGlyphs">AlwNI</text><circle cx="1510" cy="811.5" r="202.9" fill="none" stroke="#828282" stroke-width="8.8"/><path d="M1678.18,703.26 L1665.82,711.21" stroke="#000" stroke-width="3.9"/><text transform="translate(1644.01,712.18) rotate(53.46) scale(0.930,1)" text-anchor="middle" font-size="20.8" fill="#000" font-weight="bold">5</text><text transform="translate(1650.26,721.23) rotate(57.23) scale(0.930,1)" text-anchor="middle" font-size="20.8" fill="#000" font-weight="bold">0</text><text transform="translate(1655.90,730.66) rotate(61.01) scale(0.930,1)" text-anchor="middle" font-size="20.8" fill="#000" font-weight="bold">0</text><path d="M1692.04,894.34 L1678.66,888.25" stroke="#000" stroke-width="3.9"/><text transform="translate(1671.81,903.23) rotate(299.55) scale(0.930,1)" text-anchor="middle" font-size="20.8" fill="#000" font-weight="bold">1</text><text transform="translate(1676.95,893.51) rotate(296.16) scale(0.930,1)" text-anchor="middle" font-size="20.8" fill="#000" font-weight="bold">0</text><text transform="translate(1681.50,883.50) rotate(292.77) scale(0.930,1)" text-anchor="middle" font-size="20.8" fill="#000" font-weight="bold">0</text><text transform="translate(1685.46,873.24) rotate(289.38) scale(0.930,1)" text-anchor="middle" font-size="20.8" fill="#000" font-weight="bold">0</text><path d="M1538.87,1009.41 L1536.75,994.86" stroke="#000" stroke-width="3.9"/><text transform="translate(1520.44,997.21) rotate(356.78) scale(0.930,1)" text-anchor="middle" font-size="20.8" fill="#000" font-weight="bold">1</text><text transform="translate(1531.39,996.27) rotate(353.40) scale(0.930,1)" text-anchor="middle" font-size="20.8" fill="#000" font-weight="bold">5</text><text transform="translate(1542.28,994.68) rotate(350.01) scale(0.930,1)" text-anchor="middle" font-size="20.8" fill="#000" font-weight="bold">0</text><text transform="translate(1553.05,992.45) rotate(346.62) scale(0.930,1)" text-anchor="middle" font-size="20.8" fill="#000" font-weight="bold">0</text><path d="M1359.21,942.88 L1370.29,933.23" stroke="#000" stroke-width="3.9"/><text transform="translate(1359.49,920.78) rotate(414.02) scale(0.930,1)" text-anchor="middle" font-size="20.8" fill="#000" font-weight="bold">2</text><text transform="translate(1366.21,929.49) rotate(410.63) scale(0.930,1)" text-anchor="middle" font-size="20.8" fill="#000" font-weight="bold">0</text><text transform="translate(1373.44,937.78) rotate(407.24) scale(0.930,1)" text-anchor="middle" font-size="20.8" fill="#000" font-weight="bold">0</text><text transform="translate(1381.14,945.63) rotate(403.85) scale(0.930,1)" text-anchor="middle" font-size="20.8" fill="#000" font-weight="bold">0</text><path d="M1317.91,755.81 L1332.03,759.90" stroke="#000" stroke-width="3.9"/><text transform="translate(1345.99,781.10) rotate(280.50) scale(0.930,1)" text-anchor="middle" font-size="20.8" fill="#000" font-weight="bold">2</text><text transform="translate(1348.35,770.36) rotate(284.28) scale(0.930,1)" text-anchor="middle" font-size="20.8" fill="#000" font-weight="bold">5</text><text transform="translate(1351.42,759.80) rotate(288.06) scale(0.930,1)" text-anchor="middle" font-size="20.8" fill="#000" font-weight="bold">0</text><text transform="translate(1355.17,749.46) rotate(291.84) scale(0.930,1)" text-anchor="middle" font-size="20.8" fill="#000" font-weight="bold">0</text><path d="M1452.87,619.83 L1457.07,633.92" stroke="#000" stroke-width="3.9"/><text transform="translate(1446.80,657.14) rotate(337.73) scale(0.930,1)" text-anchor="middle" font-size="20.8" fill="#000" font-weight="bold">3</text><text transform="translate(1457.11,653.31) rotate(341.51) scale(0.930,1)" text-anchor="middle" font-size="20.8" fill="#000" font-weight="bold">0</text><text transform="translate(1467.65,650.17) rotate(345.29) scale(0.930,1)" text-anchor="middle" font-size="20.8" fill="#000" font-weight="bold">0</text><text transform="translate(1478.37,647.73) rotate(349.07) scale(0.930,1)" text-anchor="middle" font-size="20.8" fill="#000" font-weight="bold">0</text><path d="M1510.00,668.10 L1515.00,668.19 L1520.00,668.45 L1524.99,668.89 L1529.96,669.50 L1534.90,670.28 L1539.81,671.23 L1544.69,672.36 L1549.53,673.66 L1554.31,675.12 L1559.05,676.75 L1563.72,678.54 L1568.33,680.50 L1572.86,682.61 L1577.32,684.89 L1581.70,687.31 L1585.99,689.89 L1590.19,692.62 L1594.29,695.49 L1598.29,698.50 L1602.18,701.65 L1605.95,704.93 L1609.61,708.35 L1613.15,711.89 L1616.57,715.55 L1619.85,719.32 L1623.00,723.21 L1626.01,727.21 L1628.88,731.31 L1631.61,735.51 L1634.19,739.80 L1636.61,744.18 L1638.89,748.64 L1641.00,753.17 L1642.96,757.78 L1644.75,762.45 L1646.38,767.19 L1647.84,771.97 L1649.14,776.81 L1650.27,781.69 L1651.22,786.60 L1652.00,791.54 L1652.61,796.51 L1653.05,801.50 L1653.31,806.50 L1653.40,811.50 L1653.31,816.50 L1653.05,821.50 L1652.61,826.49 L1652.00,831.46 L1651.22,836.40 L1650.27,841.31 L1649.14,846.19 L1647.84,851.03 L1646.38,855.81 L1644.75,860.55 L1642.96,865.22 L1641.00,869.83 L1638.89,874.36 L1636.61,878.82 L1634.19,883.20 L1631.61,887.49 L1628.88,891.69 L1626.01,895.79 L1623.00,899.79 L1619.85,903.68 L1616.57,907.45 L1613.15,911.11 L1609.61,914.65 L1605.95,918.07 L1602.18,921.35 L1598.29,924.50 L1594.29,927.51 L1590.19,930.38 L1585.99,933.11 L1581.70,935.69 L1577.32,938.11 L1572.86,940.39 L1568.33,942.50 L1563.72,944.46 L1559.05,946.25 L1554.31,947.88 L1549.53,949.34 L1544.69,950.64 L1539.81,951.77 L1534.90,952.72 L1529.96,953.50 L1524.99,954.11 L1520.00,954.55 L1515.00,954.81 L1510.00,954.90 L1505.00,954.81 L1500.00,954.55 L1495.01,954.11 L1490.04,953.50 L1485.10,952.72 L1480.19,951.77 L1475.31,950.64 L1470.47,949.34 L1465.69,947.88 L1460.95,946.25 L1456.28,944.46 L1451.67,942.50 L1447.14,940.39 L1442.68,938.11 L1438.30,935.69 L1434.01,933.11 L1429.81,930.38 L1425.71,927.51 L1421.71,924.50 L1417.82,921.35 L1414.05,918.07 L1410.39,914.65 L1406.85,911.11 L1403.43,907.45 L1400.15,903.68 L1397.00,899.79 L1393.99,895.79 L1391.12,891.69 L1388.39,887.49 L1385.81,883.20 L1383.39,878.82 L1381.11,874.36 L1379.00,869.83 L1377.04,865.22 L1375.25,860.55 L1373.62,855.81 L1372.16,851.03 L1370.86,846.19 L1369.73,841.31 L1368.78,836.40 L1368.00,831.46 L1367.39,826.49 L1366.95,821.50 L1366.69,816.50 L1366.60,811.50 L1366.69,806.50 L1366.95,801.50 L1367.39,796.51 L1368.00,791.54 L1368.78,786.60 L1369.73,781.69 L1370.86,776.81 L1372.16,771.97 L1373.62,767.19 L1375.25,762.45 L1377.04,757.78 L1379.00,753.17 L1381.11,748.64 L1383.39,744.18 L1385.81,739.80 L1388.39,735.51 L1391.12,731.31 L1393.99,727.21 L1397.00,723.21 L1400.15,719.32 L1403.43,715.55 L1406.85,711.89 L1410.39,708.35 L1414.05,704.93 L1417.82,701.65 L1421.71,698.50 L1425.71,695.49 L1429.81,692.62 L1434.01,689.89 L1438.30,687.31 L1442.68,684.89 L1447.14,682.61 L1451.67,680.50 L1456.28,678.54 L1460.95,676.75 L1465.69,675.12 L1470.47,673.66 L1475.31,672.36 L1480.19,671.23 L1485.10,670.28 L1509.32,681.20 L1489.65,696.08 L1485.63,696.86 L1481.65,697.78 L1477.70,698.84 L1473.78,700.04 L1469.92,701.37 L1466.10,702.83 L1462.33,704.43 L1458.62,706.16 L1454.98,708.02 L1451.40,710.00 L1447.89,712.11 L1444.46,714.34 L1441.11,716.68 L1437.84,719.15 L1434.67,721.72 L1431.58,724.40 L1428.59,727.19 L1425.69,730.09 L1422.90,733.08 L1420.22,736.17 L1417.65,739.34 L1415.18,742.61 L1412.84,745.96 L1410.61,749.39 L1408.50,752.90 L1406.52,756.48 L1404.66,760.12 L1402.93,763.83 L1401.33,767.60 L1399.87,771.42 L1398.54,775.28 L1397.34,779.20 L1396.28,783.15 L1395.36,787.13 L1394.58,791.15 L1393.94,795.19 L1393.44,799.25 L1393.09,803.32 L1392.87,807.41 L1392.80,811.50 L1392.87,815.59 L1393.09,819.68 L1393.44,823.75 L1393.94,827.81 L1394.58,831.85 L1395.36,835.87 L1396.28,839.85 L1397.34,843.80 L1398.54,847.72 L1399.87,851.58 L1401.33,855.40 L1402.93,859.17 L1404.66,862.88 L1406.52,866.52 L1408.50,870.10 L1410.61,873.61 L1412.84,877.04 L1415.18,880.39 L1417.65,883.66 L1420.22,886.83 L1422.90,889.92 L1425.69,892.91 L1428.59,895.81 L1431.58,898.60 L1434.67,901.28 L1437.84,903.85 L1441.11,906.32 L1444.46,908.66 L1447.89,910.89 L1451.40,913.00 L1454.98,914.98 L1458.62,916.84 L1462.33,918.57 L1466.10,920.17 L1469.92,921.63 L1473.78,922.96 L1477.70,924.16 L1481.65,925.22 L1485.63,926.14 L1489.65,926.92 L1493.69,927.56 L1497.75,928.06 L1501.82,928.41 L1505.91,928.63 L1510.00,928.70 L1514.09,928.63 L1518.18,928.41 L1522.25,928.06 L1526.31,927.56 L1530.35,926.92 L1534.37,926.14 L1538.35,925.22 L1542.30,924.16 L1546.22,922.96 L1550.08,921.63 L1553.90,920.17 L1557.67,918.57 L1561.38,916.84 L1565.02,914.98 L1568.60,913.00 L1572.11,910.89 L1575.54,908.66 L1578.89,906.32 L1582.16,903.85 L1585.33,901.28 L1588.42,898.60 L1591.41,895.81 L1594.31,892.91 L1597.10,889.92 L1599.78,886.83 L1602.35,883.66 L1604.82,880.39 L1607.16,877.04 L1609.39,873.61 L1611.50,870.10 L1613.48,866.52 L1615.34,862.88 L1617.07,859.17 L1618.67,855.40 L1620.13,851.58 L1621.46,847.72 L1622.66,843.80 L1623.72,839.85 L1624.64,835.87 L1625.42,831.85 L1626.06,827.81 L1626.56,823.75 L1626.91,819.68 L1627.13,815.59 L1627.20,811.50 L1627.13,807.41 L1626.91,803.32 L1626.56,799.25 L1626.06,795.19 L1625.42,791.15 L1624.64,787.13 L1623.72,783.15 L1622.66,779.20 L1621.46,775.28 L1620.13,771.42 L1618.67,767.60 L1617.07,763.83 L1615.34,760.12 L1613.48,756.48 L1611.50,752.90 L1609.39,749.39 L1607.16,745.96 L1604.82,742.61 L1602.35,739.34 L1599.78,736.17 L1597.10,733.08 L1594.31,730.09 L1591.41,727.19 L1588.42,724.40 L1585.33,721.72 L1582.16,719.15 L1578.89,716.68 L1575.54,714.34 L1572.11,712.11 L1568.60,710.00 L1565.02,708.02 L1561.38,706.16 L1557.67,704.43 L1553.90,702.83 L1550.08,701.37 L1546.22,700.04 L1542.30,698.84 L1538.35,697.78 L1534.37,696.86 L1530.35,696.08 L1526.31,695.44 L1522.25,694.94 L1518.18,694.59 L1514.09,694.37 L1510.00,694.30Z" fill="#d6fda3" stroke="#8ec35e" stroke-width="1.9" stroke-linejoin="round"/><path d="M1618.98,842.13 L1617.83,845.94 L1616.56,849.70 L1615.15,853.41 L1613.62,857.08 L1611.96,860.69 L1610.17,864.23 L1608.25,867.72 L1606.22,871.13 L1604.07,874.47 L1601.80,877.73 L1599.42,880.91 L1596.93,884.01 L1594.33,887.01 L1591.63,889.92 L1588.83,892.74 L1585.93,895.46 L1582.94,898.07 L1579.86,900.57 L1576.69,902.97 L1573.44,905.25 L1570.11,907.42 L1566.71,909.47 L1563.23,911.40 L1559.69,913.21 L1556.10,914.89 L1552.44,916.44 L1548.73,917.87 L1544.97,919.16 L1541.18,920.32 L1537.34,921.35 L1533.47,922.24 L1529.57,923.00 L1525.64,923.61 L1521.70,924.09 L1517.74,924.44 L1513.77,924.64 L1509.80,924.70 L1505.83,924.62 L1501.86,924.41 L1497.91,924.05 L1493.96,923.56 L1490.04,922.93 L1486.14,922.16 L1482.28,921.25 L1478.44,920.21 L1474.65,919.04 L1470.90,917.73 L1467.19,916.29 L1463.54,914.73 L1459.95,913.03 L1456.42,911.21 L1452.95,909.27 L1449.55,907.21 L1446.23,905.03 L1442.99,902.74 L1439.83,900.33 L1436.76,897.81 L1433.77,895.19 L1430.88,892.46 L1428.09,889.64 L1425.40,886.71 L1422.81,883.70 L1420.33,880.60 L1417.96,877.41 L1415.71,874.14 L1413.57,870.79 L1411.55,867.37 L1409.65,863.88 L1407.87,860.33 L1406.22,856.71 L1404.70,853.04 L1403.31,849.32 L1402.04,845.56 L1400.92,841.75 L1399.92,837.90 L1399.06,834.02 L1398.34,830.12 L1397.76,826.19 L1397.31,822.24 L1397.00,818.28 L1396.83,814.31 L1396.81,810.34 L1396.92,806.37 L1397.17,802.40 L1397.55,798.45 L1398.08,794.51 L1398.75,790.59 L1399.55,786.70 L1400.49,782.84 L1401.56,779.02 L1402.77,775.23 L1404.11,771.49 L1405.57,767.80 L1407.17,764.16 L1408.90,760.59 L1410.75,757.07 L1412.72,753.62 L1414.81,750.24 L1417.01,746.94 L1419.34,743.72 L1421.77,740.58 L1424.31,737.53 L1426.96,734.56 L1429.71,731.70 L1432.56,728.93 L1435.51,726.26 L1438.54,723.70 L1441.67,721.25 L1444.88,718.91 L1448.17,716.68 L1451.53,714.57 L1454.97,712.58 L1458.47,710.71 L1462.04,708.96 L1465.67,707.34 L1469.35,705.85 L1473.08,704.49 L1476.86,703.26 L1480.68,702.16 L1484.54,701.20 L1509.48,711.30 L1490.38,726.53 L1487.42,727.28 L1484.47,728.12 L1481.56,729.07 L1478.69,730.12 L1475.85,731.26 L1473.06,732.51 L1470.31,733.86 L1467.61,735.30 L1464.96,736.83 L1462.37,738.46 L1459.84,740.17 L1457.36,741.98 L1454.96,743.87 L1452.62,745.84 L1450.35,747.89 L1448.15,750.03 L1446.04,752.24 L1444.00,754.52 L1442.04,756.87 L1440.16,759.29 L1438.37,761.77 L1436.67,764.31 L1435.06,766.91 L1433.54,769.57 L1432.12,772.28 L1430.79,775.04 L1429.56,777.84 L1428.43,780.68 L1427.40,783.56 L1426.47,786.48 L1425.64,789.43 L1424.92,792.40 L1424.30,795.40 L1423.79,798.41 L1423.38,801.45 L1423.08,804.49 L1422.89,807.55 L1422.80,810.60 L1422.83,813.66 L1422.96,816.72 L1423.19,819.77 L1423.54,822.81 L1423.99,825.84 L1424.54,828.85 L1425.20,831.84 L1425.97,834.80 L1426.84,837.73 L1427.81,840.64 L1428.88,843.50 L1430.06,846.33 L1431.33,849.11 L1432.70,851.85 L1434.16,854.54 L1435.72,857.17 L1437.37,859.75 L1439.10,862.27 L1440.93,864.73 L1442.84,867.12 L1444.83,869.44 L1446.90,871.69 L1449.06,873.87 L1451.28,875.97 L1453.58,877.99 L1455.95,879.93 L1458.38,881.78 L1460.88,883.55 L1463.44,885.23 L1466.05,886.82 L1468.72,888.31 L1471.44,889.71 L1474.21,891.02 L1477.02,892.22 L1479.88,893.33 L1482.77,894.34 L1485.69,895.24 L1488.64,896.04 L1491.62,896.74 L1494.63,897.33 L1497.65,897.82 L1500.68,898.20 L1503.73,898.47 L1506.79,898.64 L1509.85,898.70 L1512.91,898.65 L1515.96,898.50 L1519.01,898.23 L1522.05,897.86 L1525.07,897.39 L1528.08,896.81 L1531.06,896.12 L1534.01,895.33 L1536.94,894.43 L1539.83,893.44 L1542.69,892.34 L1545.51,891.14 L1548.28,889.85 L1551.01,888.46 L1553.68,886.97 L1556.30,885.39 L1558.87,883.72 L1561.37,881.96 L1563.81,880.12 L1566.19,878.19 L1568.49,876.17 L1570.72,874.08 L1572.88,871.91 L1574.96,869.67 L1576.97,867.35 L1578.88,864.97 L1580.72,862.52 L1582.46,860.01 L1584.12,857.43 L1585.69,854.80 L1587.16,852.12 L1588.54,849.39 L1589.82,846.61 L1591.00,843.79 L1592.09,840.93 L1593.07,838.03 L1593.95,835.10Z" fill="#f3e2c8" stroke="#b0a086" stroke-width="1.9" stroke-linejoin="round"/><path d="M1510.00,698.30 L1513.98,698.37 L1517.96,698.58 L1521.94,698.93 L1525.89,699.42 L1529.83,700.05 L1533.74,700.82 L1537.62,701.72 L1541.47,702.76 L1545.27,703.94 L1549.04,705.24 L1552.76,706.68 L1556.42,708.26 L1560.02,709.95 L1563.57,711.78 L1567.05,713.72 L1570.45,715.79 L1573.78,717.98 L1577.04,720.28 L1580.21,722.70 L1583.29,725.23 L1586.28,727.86 L1589.18,730.60 L1591.98,733.44 L1594.67,736.37 L1597.27,739.40 L1599.75,742.51 L1602.12,745.72 L1604.38,749.00 L1606.52,752.36 L1608.55,755.80 L1610.45,759.30 L1612.22,762.87 L1613.87,766.50 L1615.39,770.18 L1616.78,773.92 L1618.04,777.70 L1619.16,781.52 L1620.15,785.38 L1621.00,789.28 L1621.71,793.20 L1622.29,797.14 L1622.72,801.10 L1623.02,805.08 L1623.17,809.06 L1623.19,813.05 L1623.06,817.03 L1606.74,837.60 L1597.10,815.76 L1597.19,812.69 L1597.18,809.62 L1597.06,806.55 L1596.83,803.49 L1596.50,800.44 L1596.05,797.40 L1595.50,794.38 L1594.85,791.38 L1594.09,788.41 L1593.22,785.46 L1592.25,782.55 L1591.18,779.67 L1590.01,776.83 L1588.74,774.04 L1587.37,771.29 L1585.91,768.59 L1584.35,765.94 L1582.70,763.35 L1580.96,760.82 L1579.14,758.36 L1577.22,755.96 L1575.23,753.63 L1573.15,751.37 L1570.99,749.18 L1568.76,747.07 L1566.46,745.04 L1564.08,743.10 L1561.64,741.23 L1559.13,739.46 L1556.57,737.78 L1553.94,736.18 L1551.26,734.68 L1548.53,733.28 L1545.76,731.97 L1542.94,730.76 L1540.07,729.65 L1537.17,728.64 L1534.24,727.74 L1531.28,726.94 L1528.29,726.24 L1525.27,725.65 L1522.24,725.16 L1519.19,724.79 L1516.14,724.52 L1513.07,724.35 L1510.00,724.30Z" fill="#fdf3b6" stroke="#c4b978" stroke-width="1.9" stroke-linejoin="round"/><path d="M1519.79,728.78 L1522.71,729.17 L1525.61,729.68 L1528.49,730.28 L1531.34,730.98 L1534.18,731.79 L1536.98,732.69 L1539.74,733.69 L1542.47,734.79 L1545.16,735.98 L1547.81,737.27 L1550.41,738.66 L1552.95,740.13 L1555.45,741.69 L1557.88,743.34 L1560.26,745.07 L1562.58,746.89 L1564.83,748.79 L1567.01,750.76 L1569.12,752.81 L1571.15,754.94 L1573.11,757.13 L1574.99,759.40 L1576.79,761.73 L1578.51,764.12 L1580.14,766.57 L1581.68,769.07 L1583.14,771.63 L1584.50,774.24 L1585.77,776.89 L1586.95,779.59 L1588.02,782.33 L1580.93,810.01 L1564.89,790.98 L1564.13,789.05 L1563.30,787.15 L1562.41,785.29 L1561.45,783.45 L1560.43,781.65 L1559.34,779.89 L1558.20,778.17 L1556.99,776.48 L1555.72,774.85 L1554.40,773.25 L1553.02,771.71 L1551.59,770.22 L1550.10,768.77 L1548.57,767.38 L1546.99,766.05 L1545.36,764.77 L1543.69,763.55 L1541.97,762.39 L1540.22,761.29 L1538.42,760.26 L1536.60,759.28 L1534.74,758.38 L1532.84,757.54 L1530.92,756.76 L1528.98,756.06 L1527.01,755.42 L1525.02,754.86 L1523.01,754.36 L1520.98,753.94 L1518.94,753.59 L1516.89,753.31Z" fill="#c3c7e2" stroke="#7d85a8" stroke-width="1.9" stroke-linejoin="round"/><path d="M1593.24,814.70 L1593.24,814.70 L1580.33,820.88 L1568.56,813.75 L1568.56,813.75Z" fill="#dccdee" stroke="#9a86b4" stroke-width="1.9" stroke-linejoin="round"/><path d="M1591.51,828.68 L1591.51,828.68 L1578.60,829.62 L1567.34,823.58 L1567.34,823.58Z" fill="#e8b8d0" stroke="#b8608c" stroke-width="1.9" stroke-linejoin="round"/><path d="M1586.96,843.38 L1586.96,843.38 L1574.56,840.92 L1564.14,833.93 L1564.14,833.93Z" fill="#9ab0d0" stroke="#4f6e9c" stroke-width="1.9" stroke-linejoin="round"/><path d="M1570.12,869.16 L1568.02,871.27 L1565.85,873.31 L1563.60,875.26 L1561.28,877.14 L1558.90,878.93 L1556.46,880.64 L1553.96,882.26 L1551.40,883.78 L1548.79,885.22 L1546.12,886.56 L1543.42,887.80 L1540.66,888.95 L1537.87,890.00 L1535.05,890.94 L1532.19,891.79 L1529.30,892.53 L1526.39,893.17 L1523.46,893.71 L1520.51,894.13 L1517.55,894.46 L1514.58,894.67 L1511.60,894.78 L1508.62,894.79 L1505.64,894.69 L1483.77,877.42 L1506.93,870.02 L1509.03,870.09 L1511.12,870.09 L1513.22,870.01 L1515.31,869.86 L1517.40,869.63 L1519.47,869.33 L1521.53,868.95 L1523.58,868.50 L1525.61,867.98 L1527.62,867.39 L1529.61,866.72 L1531.57,865.98 L1533.51,865.18 L1535.41,864.30 L1537.29,863.36 L1539.12,862.35 L1540.92,861.28 L1542.68,860.14 L1544.40,858.94 L1546.08,857.68 L1547.71,856.36 L1549.29,854.98 L1550.82,853.55 L1552.30,852.06Z" fill="#fdf3b6" stroke="#c4b978" stroke-width="1.9" stroke-linejoin="round"/><path d="M1463.18,880.40 L1463.18,880.40 L1467.10,868.01 L1477.06,859.97 L1477.06,859.97Z" fill="#e6e8ec" stroke="#a4a8b0" stroke-width="1.9" stroke-linejoin="round"/><path d="M1447.71,866.81 L1445.79,864.57 L1443.96,862.27 L1442.21,859.90 L1440.54,857.48 L1438.96,854.99 L1437.46,852.46 L1436.06,849.87 L1434.75,847.23 L1433.54,844.55 L1432.42,841.83 L1431.39,839.07 L1430.47,836.27 L1429.64,833.45 L1428.92,830.59 L1428.29,827.72 L1427.77,824.82 L1427.35,821.90 L1427.04,818.98 L1426.82,816.04 L1426.72,813.10 L1426.71,810.16 L1426.81,807.21 L1427.01,804.28 L1427.32,801.35 L1427.73,798.43 L1428.24,795.53 L1428.86,792.66 L1429.58,789.80 L1430.39,786.97 L1431.31,784.17 L1432.32,781.41 L1433.44,778.68 L1434.64,776.00 L1435.94,773.36 L1437.34,770.77 L1438.82,768.22 L1440.40,765.74 L1442.06,763.31 L1443.80,760.93 L1445.63,758.63 L1470.94,752.27 L1464.72,774.30 L1463.43,775.93 L1462.20,777.60 L1461.04,779.31 L1459.93,781.06 L1458.88,782.84 L1457.90,784.67 L1456.99,786.53 L1456.14,788.42 L1455.36,790.33 L1454.64,792.28 L1454.00,794.24 L1453.42,796.23 L1452.92,798.24 L1452.49,800.27 L1452.13,802.31 L1451.84,804.36 L1451.62,806.42 L1451.48,808.48 L1451.41,810.55 L1451.41,812.62 L1451.49,814.69 L1451.64,816.76 L1451.86,818.82 L1452.15,820.87 L1452.52,822.91 L1452.96,824.93 L1453.47,826.94 L1454.05,828.93 L1454.70,830.89 L1455.42,832.83 L1456.21,834.75 L1457.06,836.64 L1457.99,838.49 L1458.97,840.31 L1460.02,842.10 L1461.13,843.84 L1462.31,845.55 L1463.54,847.21 L1464.83,848.83 L1466.18,850.41Z" fill="#c9c5c5" stroke="#8d8d8d" stroke-width="1.9" stroke-linejoin="round"/><path d="M1464.63,741.64 L1464.63,741.64 L1485.04,745.09 L1478.08,762.35 L1478.08,762.35Z" fill="#c9c5c5" stroke="#8d8d8d" stroke-width="1.9" stroke-linejoin="round"/><rect x="1509" y="588.5" width="2.1" height="143.5" fill="#000"/><text transform="translate(1558.57,731.49) rotate(31.26) scale(0.960,1)" text-anchor="middle" font-size="22.5" fill="#111">i</text><text transform="translate(1569.10,738.92) rotate(39.16) scale(0.960,1)" text-anchor="middle" font-size="22.5" fill="#111">n</text><text transform="translate(1578.51,747.73) rotate(47.05) scale(0.960,1)" text-anchor="middle" font-size="22.5" fill="#111">s</text><text transform="translate(1586.62,757.74) rotate(54.95) scale(0.960,1)" text-anchor="middle" font-size="22.5" fill="#111">e</text><text transform="translate(1593.28,768.78) rotate(62.84) scale(0.960,1)" text-anchor="middle" font-size="22.5" fill="#111">r</text><text transform="translate(1598.36,780.63) rotate(70.74) scale(0.960,1)" text-anchor="middle" font-size="22.5" fill="#111">t</text><text transform="translate(1448.47,723.59) rotate(505.01) scale(0.920,1)" text-anchor="middle" font-size="22.5" fill="#111">v</text><text transform="translate(1438.93,731.11) rotate(498.52) scale(0.920,1)" text-anchor="middle" font-size="22.5" fill="#111">e</text><text transform="translate(1430.30,739.65) rotate(492.03) scale(0.920,1)" text-anchor="middle" font-size="22.5" fill="#111">c</text><text transform="translate(1422.70,749.12) rotate(485.55) scale(0.920,1)" text-anchor="middle" font-size="22.5" fill="#111">t</text><text transform="translate(1416.21,759.38) rotate(479.06) scale(0.920,1)" text-anchor="middle" font-size="22.5" fill="#111">o</text><text transform="translate(1410.92,770.32) rotate(472.57) scale(0.920,1)" text-anchor="middle" font-size="22.5" fill="#111">r</text><text transform="translate(1406.90,781.77) rotate(466.08) scale(0.920,1)" text-anchor="middle" font-size="22.5" fill="#111">_</text><text transform="translate(1404.20,793.61) rotate(459.60) scale(0.920,1)" text-anchor="middle" font-size="22.5" fill="#111">b</text><text transform="translate(1402.86,805.68) rotate(453.11) scale(0.920,1)" text-anchor="middle" font-size="22.5" fill="#111">a</text><text transform="translate(1402.89,817.83) rotate(446.62) scale(0.920,1)" text-anchor="middle" font-size="22.5" fill="#111">c</text><text transform="translate(1404.29,829.89) rotate(440.13) scale(0.920,1)" text-anchor="middle" font-size="22.5" fill="#111">k</text><text transform="translate(1407.04,841.72) rotate(433.64) scale(0.920,1)" text-anchor="middle" font-size="22.5" fill="#111">b</text><text transform="translate(1411.12,853.16) rotate(427.16) scale(0.920,1)" text-anchor="middle" font-size="22.5" fill="#111">o</text><text transform="translate(1416.46,864.06) rotate(420.67) scale(0.920,1)" text-anchor="middle" font-size="22.5" fill="#111">n</text><text transform="translate(1422.99,874.30) rotate(414.18) scale(0.920,1)" text-anchor="middle" font-size="22.5" fill="#111">e</text><text transform="translate(1430.65,883.72) rotate(407.69) scale(0.920,1)" text-anchor="middle" font-size="22.5" fill="#111">-</text><text transform="translate(1439.32,892.23) rotate(401.20) scale(0.920,1)" text-anchor="middle" font-size="22.5" fill="#111">9</text><text transform="translate(1448.89,899.70) rotate(394.72) scale(0.920,1)" text-anchor="middle" font-size="22.5" fill="#111">2</text><text transform="translate(1459.25,906.04) rotate(388.23) scale(0.920,1)" text-anchor="middle" font-size="22.5" fill="#111">4</text><text transform="translate(1470.25,911.17) rotate(381.74) scale(0.920,1)" text-anchor="middle" font-size="22.5" fill="#111">-</text><text transform="translate(1481.77,915.02) rotate(375.25) scale(0.920,1)" text-anchor="middle" font-size="22.5" fill="#111">3</text><text transform="translate(1493.65,917.55) rotate(368.77) scale(0.920,1)" text-anchor="middle" font-size="22.5" fill="#111">1</text><text transform="translate(1505.74,918.72) rotate(362.28) scale(0.920,1)" text-anchor="middle" font-size="22.5" fill="#111">4</text><text transform="translate(1517.88,918.51) rotate(355.79) scale(0.920,1)" text-anchor="middle" font-size="22.5" fill="#111">5</text><text transform="translate(1472.54,943.59) rotate(375.83) scale(0.930,1)" text-anchor="middle" font-size="22.5" fill="#111">s</text><text transform="translate(1484.51,946.41) rotate(370.70) scale(0.930,1)" text-anchor="middle" font-size="22.5" fill="#111">o</text><text transform="translate(1496.68,948.15) rotate(365.57) scale(0.930,1)" text-anchor="middle" font-size="22.5" fill="#111">u</text><text transform="translate(1508.96,948.80) rotate(360.43) scale(0.930,1)" text-anchor="middle" font-size="22.5" fill="#111">r</text><text transform="translate(1521.25,948.34) rotate(355.30) scale(0.930,1)" text-anchor="middle" font-size="22.5" fill="#111">c</text><text transform="translate(1533.45,946.78) rotate(350.17) scale(0.930,1)" text-anchor="middle" font-size="22.5" fill="#111">e</text><text transform="translate(1446.54,819.79) rotate(262.56) scale(0.880,1)" text-anchor="middle" font-size="21.5" fill="#333">a</text><text transform="translate(1446.08,808.32) rotate(272.85) scale(0.880,1)" text-anchor="middle" font-size="21.5" fill="#333">m</text><text transform="translate(1447.68,796.94) rotate(283.15) scale(0.880,1)" text-anchor="middle" font-size="21.5" fill="#333">p</text><text transform="translate(1451.28,786.04) rotate(293.44) scale(0.880,1)" text-anchor="middle" font-size="21.5" fill="#333">R</text></svg>
<div class="abs " style="left:1001px;top:75px;width:2px;height:1323px;background:#babdc2;"></div>
<div class="abs " style="left:2017.2px;top:149px;width:2px;height:1249px;background:#dcdde0;"></div>
<svg class="ic" style="left:2020px;top:150px" width="96" height="700" viewBox="2020 150 96 700"><path d="M2058.2,185 H2078 V211 L2068.1,201.6 L2058.2,211Z" fill="#47474a"/><g fill="none" stroke="#47474a"><ellipse cx="2059.6" cy="294.6" rx="4.6" ry="3.4" stroke-width="2.3" transform="rotate(28 2059.6 294.6)"/><ellipse cx="2059.6" cy="305.6" rx="4.6" ry="3.4" stroke-width="2.3" transform="rotate(-28 2059.6 305.6)"/><path d="M2063.5,297.6 L2078.5,306.2 L2080,308 L2076.5,307.8 L2062.8,301.2 M2063.5,302.6 L2078.5,293.9 L2080,292.1 L2076.5,292.3 L2062.8,298.9" stroke-width="1.1" fill="#fff"/></g><path d="M2054,393.2 H2073.6 V390.4 L2080.4,395 L2073.6,399.6 V396.8 H2054Z" fill="#47474a"/><path d="M2080.4,402.2 H2060.8 V399.4 L2054,404 L2060.8,408.6 V405.8 H2080.4Z" fill="#47474a"/><circle cx="2067" cy="497.7" r="11" fill="none" stroke="#47474a" stroke-width="2.8"/><path d="M2066.6,491.5 V498.3 H2071.4" fill="none" stroke="#47474a" stroke-width="2.2"/><rect x="2054" y="587.20" width="15.00" height="4.2" rx="1" fill="#47474a"/><rect x="2054" y="593.80" width="23.60" height="4.2" rx="1" fill="#47474a"/><rect x="2054" y="600.30" width="20.00" height="4.2" rx="1" fill="#47474a"/><rect x="2054" y="606.90" width="26.20" height="4.2" rx="1" fill="#47474a"/><circle cx="2067" cy="698.4" r="7.7" fill="none" stroke="#47474a" stroke-width="2.8"/><path d="M2054,698.4 H2064.4 M2069.6,698.4 H2080 M2067,685.4 V695.8 M2067,701 V711.4" stroke="#47474a" stroke-width="3.7"/><circle cx="2067" cy="798.4" r="12.6" fill="#47474a"/><circle cx="2067" cy="791.7" r="2.3" fill="#fff"/><path d="M2063.4,795.6 H2068.9 V803.2 H2071 V805.9 H2063.2 V803.2 H2065.3 V798.3 H2063.4Z" fill="#fff"/></svg>
<div class="abs" style="left:0;top:1397px;width:2116px;height:50px;background:linear-gradient(#e4e4e7,#d9d9dc);border-top:2px solid #bfc1c6"></div>
<div class="abs " style="left:154.5px;top:1399px;width:1.6px;height:48px;background:#c3c4c8;"></div>
<div class="abs " style="left:1660px;top:1399px;width:186.5px;height:48px;background:#e4e4e7;"></div>
<div class="abs" style="left:1846.5px;top:1399px;width:250px;height:48px;background:#d3d3d6;box-shadow:inset 2px 2px 4px rgba(0,0,0,.10)"></div>
<div class="abs " style="left:2096.5px;top:1399px;width:20px;height:48px;background:#e1e1e4;"></div>
<div class="abs " style="left:0px;top:1446.8px;width:2116px;height:10px;background:#bbbbbe;"></div>
<div class="abs " style="left:2085.5px;top:1446.8px;width:31px;height:10px;background:#fff;"></div>
<div class="abs " style="left:0px;top:1456.6px;width:2116px;height:4px;background:#20232f;"></div>
<span class="t" style="left:6.00px;top:1412.77px;font-size:22px;line-height:22px;color:#15151a;-webkit-text-stroke:0.9px #15151a;transform:scaleX(0.9677);">BASES</span>
<span class="t" style="left:85.00px;top:1412.77px;font-size:22px;line-height:22px;color:#15151a;-webkit-text-stroke:0.3px #15151a;transform:scaleX(0.9910);">3145</span>
<span class="t" style="left:1681.50px;top:1412.57px;font-size:22px;line-height:22px;color:#15151a;-webkit-text-stroke:0.45px #15151a;">ASSEMBLY</span>
<svg class="ic" style="left:1808px;top:1420px" width="20" height="12"><path d="M2.2,10.4 L10.1,1.6 L18,10.4Z" fill="#15151a"/></svg>
<span class="t" style="left:1868.00px;top:1412.57px;font-size:22px;line-height:22px;color:#15151a;-webkit-text-stroke:0.45px #15151a;">SPLIT WORKSPACE</span>
<div class="abs " style="left:5px;top:1318.7px;width:376.7px;height:64.2px;background:#5865f2;border-radius:33px"></div>
<svg class="ic" style="left:24px;top:1339px" width="24" height="24"><rect x="1" y="1.5" width="21.4" height="21.4" rx="3.5" fill="#fff"/><path d="M6.3,12.2 L10.2,16 L17.2,8.4" fill="none" stroke="#5865f2" stroke-width="2.5" stroke-linecap="round" stroke-linejoin="round"/></svg>
<span class="t" style="left:59.00px;top:1340.83px;font-size:23px;line-height:23px;color:#fff;-webkit-text-stroke:0.35px #fff;transform:scaleX(1.0248);">Explore Molecular Biology</span>
<svg class="ic" style="left:342px;top:1340px" width="22" height="22"><path d="M3.6,3.9 L18.6,18.7 M18.6,3.9 L3.6,18.7" stroke="#fff" stroke-width="2.3" stroke-linecap="round"/></svg>
<div class="abs" style="left:2025px;top:1305px;width:84px;height:84px;border-radius:50%;background:#5865f2;box-shadow:0 3px 8px rgba(0,0,0,.22)"></div>
<span class="t" style="left:2058.50px;top:1331.36px;font-size:33px;line-height:33px;color:#fff;-webkit-text-stroke:0.7px #fff;transform:scaleX(0.8990);">?</span>
<div class="abs" style="left:820px;top:1370px;width:181px;height:61.5px;border-radius:8px;background:rgba(89,89,90,.86);border:1.5px solid rgba(215,215,218,.8);box-shadow:0 2px 8px rgba(0,0,0,.25)"></div>
<span class="t" style="left:839.00px;top:1389.06px;font-size:24.5px;line-height:24.5px;color:#dcdcdc;transform:scaleX(1.0087);">youtube.com</span>
</body></html>
